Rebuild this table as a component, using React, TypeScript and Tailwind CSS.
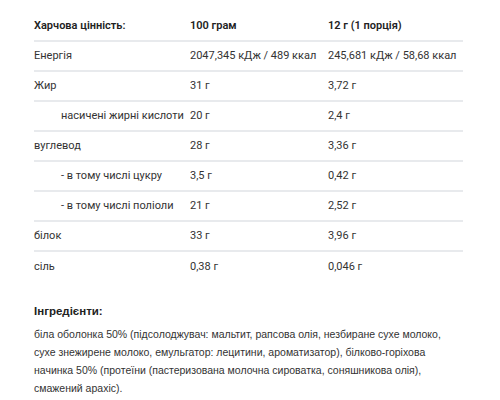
const rows = [
  { name: "Енергія", per100: "2047,345 кДж / 489 ккал", portion: "245,681 кДж / 58,68 ккал", indent: false },
  { name: "Жир", per100: "31 г", portion: "3,72 г", indent: false },
  { name: "насичені жирні кислоти", per100: "20 г", portion: "2,4 г", indent: true },
  { name: "вуглевод", per100: "28 г", portion: "3,36 г", indent: false },
  { name: "- в тому числі цукру", per100: "3,5 г", portion: "0,42 г", indent: true },
  { name: "- в тому числі поліоли", per100: "21 г", portion: "2,52 г", indent: true },
  { name: "білок", per100: "33 г", portion: "3,96 г", indent: false },
  { name: "сіль", per100: "0,38 г", portion: "0,046 г", indent: false },
];

const App = () => {
  return (
    <div className="w-[500px] h-[400px] bg-white overflow-hidden pl-[34px] pr-[37px] pt-[12px] text-[#333] font-['Roboto',sans-serif]">
      <div className="text-[11px]">
        <div className="grid grid-cols-[156px_138px_1fr] h-[30px] items-center border-b-2 border-[#e8eaed] font-semibold text-[#222]">
          <span>Харчова цінність:</span>
          <span>100 грам</span>
          <span>12 г (1 порція)</span>
        </div>
        {rows.map((r, i) => (
          <div
            key={r.name}
            className={
              "grid grid-cols-[156px_138px_1fr] h-[30px] items-center " +
              (i < rows.length - 1 ? "border-b-2 border-[#e8eaed]" : "")
            }
          >
            <span className={r.indent ? "pl-[27px]" : ""}>{r.name}</span>
            <span>{r.per100}</span>
            <span>{r.portion}</span>
          </div>
        ))}
      </div>
      <div className="mt-[21px] font-['Liberation_Sans',Arial,sans-serif]">
        <h3 className="text-[11.5px] font-bold text-[#222] mb-[5px]">Інгредієнти:</h3>
        <p className="text-[10.5px] leading-[18px] text-[#333]">
          біла оболонка 50% (підсолоджувач: мальтит, рапсова олія, незбиране сухе молоко, сухе знежирене молоко, емульгатор: лецитини, ароматизатор), білково-горіхова начинка 50% (протеїни (пастеризована молочна сироватка, соняшникова олія), смажений арахіс).
        </p>
      </div>
    </div>
  );
};

export default App;
